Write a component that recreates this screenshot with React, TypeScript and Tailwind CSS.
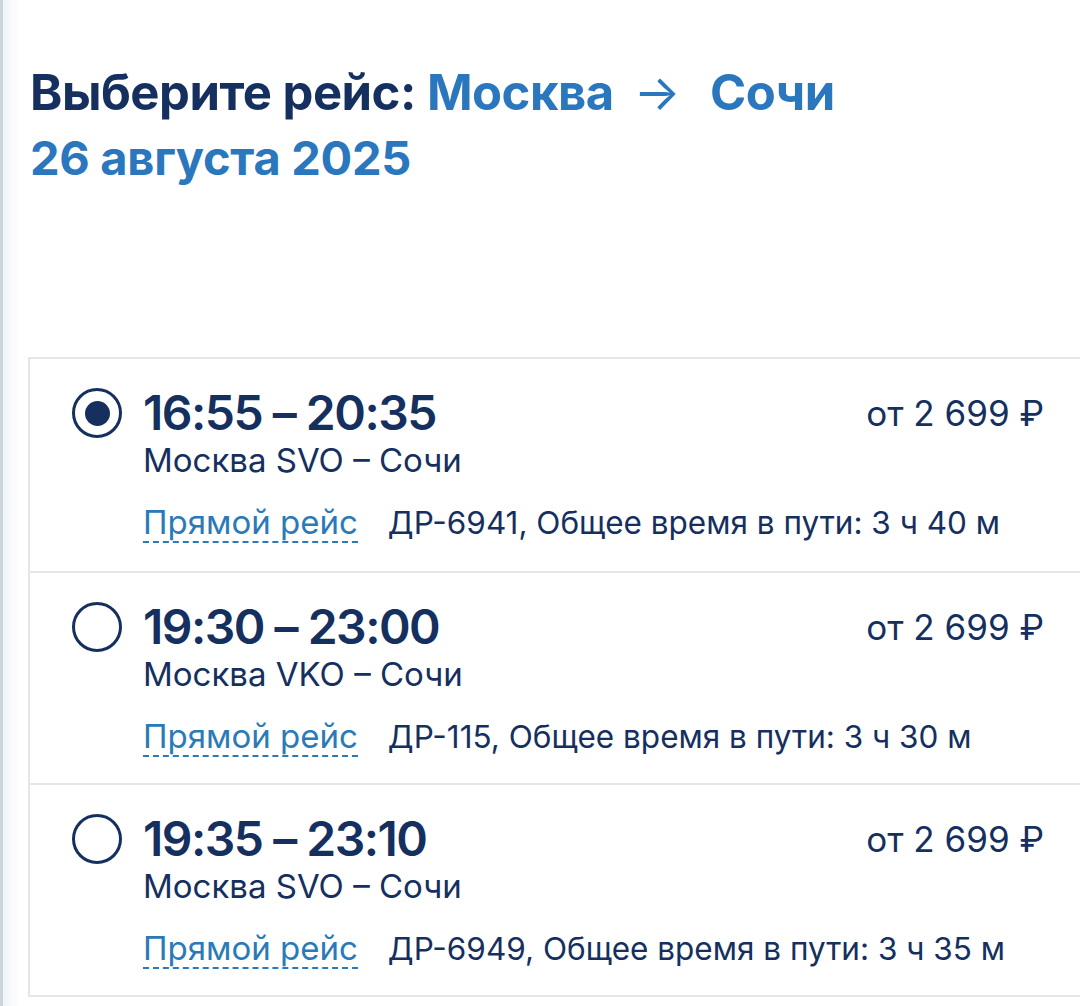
import React from "react";

const flights = [
  { time: "16:55 – 20:35", route: "Москва SVO – Сочи", info: "ДР-6941, Общее время в пути: 3 ч 40 м", selected: true },
  { time: "19:30 – 23:00", route: "Москва VKO – Сочи", info: "ДР-115, Общее время в пути: 3 ч 30 м", selected: false },
  { time: "19:35 – 23:10", route: "Москва SVO – Сочи", info: "ДР-6949, Общее время в пути: 3 ч 35 м", selected: false },
];

function Radio({ selected }: { selected: boolean }) {
  return (
    <div className="w-[50px] h-[50px] rounded-full border-[3px] border-[#15305f] flex items-center justify-center shrink-0">
      {selected && <div className="w-[25px] h-[25px] rounded-full bg-[#15305f]" />}
    </div>
  );
}

export default function App() {
  return (
    <div
      className="relative w-[1080px] h-[1006px] overflow-hidden bg-white text-[#15305f]"
      style={{ fontFamily: "Inter, 'Noto Sans', sans-serif" }}
    >
      <div className="absolute left-0 top-0 bottom-0 w-[20px] bg-gradient-to-r from-[#eef3f6] to-white" />
      <div className="absolute left-0 top-0 bottom-0 w-[3px] bg-[#c9d7dd]" />

      <div className="pl-[30px] pt-[60px]">
        <div className="flex items-baseline text-[49px] leading-[65px] font-bold tracking-[-0.5px]">
          <span className="text-[#15305f] whitespace-pre">Выберите рейс: </span>
          <span className="text-[#2a77bd]">Москва</span>
          <span className="text-[#2a77bd] font-normal ml-[20px] mr-[30px]">→</span>
          <span className="text-[#2a77bd]">Сочи</span>
        </div>
        <div className="text-[47px] leading-[65px] font-bold tracking-[-0.3px] text-[#2a77bd]">26 августа 2025</div>
      </div>

      <div className="ml-[28px] mt-[167px] w-[1080px] border-2 border-[#e6e6e6]">
        {flights.map((f, i) => (
          <div
            key={i}
            className={`flex h-[212px] pl-[42px] pr-[62px] pt-[31px] ${i > 0 ? "border-t-2 border-[#e6e6e6]" : ""}`}
          >
            <div className="mt-[-2px]">
              <Radio selected={f.selected} />
            </div>
            <div className="ml-[21px] flex-1">
              <div className="flex items-start justify-between">
                <div className="text-[48px] leading-[46px] font-semibold tracking-[-1.5px] whitespace-pre">{f.time}</div>
                <div className="text-[35px] leading-[46px]">от 2 699 ₽</div>
              </div>
              <div className="text-[33px] leading-[40px] mt-[4px]">{f.route}</div>
              <div className="flex items-baseline mt-[23px] leading-[38px]">
                <span className="text-[33px] text-[#2a7ab8] border-b-2 border-dashed border-[#2a7ab8]">Прямой рейс</span>
                <span className="text-[31.5px] ml-[30px]">{f.info}</span>
              </div>
            </div>
          </div>
        ))}
      </div>
    </div>
  );
}
